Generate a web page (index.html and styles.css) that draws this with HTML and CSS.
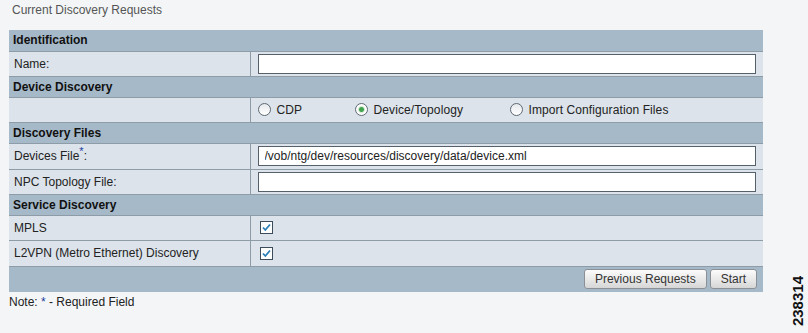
FILE: index.html
```html
<!DOCTYPE html>
<html lang="en">
<head>
  <meta charset="UTF-8">
  <meta name="viewport" content="width=device-width, initial-scale=1.0">
  <title>Current Discovery Requests</title>
  <link rel="stylesheet" href="styles.css">
</head>
<body>

  <div class="page">
    <h1 class="title">Current Discovery Requests</h1>

    <table class="form-table">
      <!-- Identification -->
      <tr class="section"><th colspan="2">Identification</th></tr>
      <tr class="row">
        <td class="label">Name:</td>
        <td class="field"><input type="text" class="text-input"></td>
      </tr>

      <!-- Device Discovery -->
      <tr class="section"><th colspan="2">Device Discovery</th></tr>
      <tr class="row">
        <td class="label"></td>
        <td class="field">
          <div class="radios">
            <label class="radio-item r-cdp"><input type="radio" name="mode"> CDP</label>
            <label class="radio-item r-dev"><input type="radio" name="mode" checked> Device/Topology</label>
            <label class="radio-item"><input type="radio" name="mode"> Import Configuration Files</label>
          </div>
        </td>
      </tr>

      <!-- Discovery Files -->
      <tr class="section"><th colspan="2">Discovery Files</th></tr>
      <tr class="row tall">
        <td class="label">Devices File<sup class="req">*</sup>:</td>
        <td class="field"><input type="text" class="text-input" value="/vob/ntg/dev/resources/discovery/data/device.xml"></td>
      </tr>
      <tr class="row">
        <td class="label">NPC Topology File:</td>
        <td class="field"><input type="text" class="text-input"></td>
      </tr>

      <!-- Service Discovery -->
      <tr class="section"><th colspan="2">Service Discovery</th></tr>
      <tr class="row">
        <td class="label">MPLS</td>
        <td class="field">
          <span class="check"><svg width="11" height="11" viewBox="0 0 11 11"><path d="M2 5.5 L4.3 8 L9 2.5" fill="none" stroke="#2b7fb8" stroke-width="1.8"/></svg></span>
        </td>
      </tr>
      <tr class="row tall">
        <td class="label">L2VPN (Metro Ethernet) Discovery</td>
        <td class="field">
          <span class="check"><svg width="11" height="11" viewBox="0 0 11 11"><path d="M2 5.5 L4.3 8 L9 2.5" fill="none" stroke="#2b7fb8" stroke-width="1.8"/></svg></span>
        </td>
      </tr>

      <!-- Buttons -->
      <tr class="actions">
        <td colspan="2">
          <div class="buttons">
            <button class="btn">Previous Requests</button>
            <button class="btn">Start</button>
          </div>
        </td>
      </tr>
    </table>

    <p class="note">Note: <span class="req-note">*</span> - Required Field</p>
  </div>

  <div class="figure-id">238314</div>

</body>
</html>
```

FILE: styles.css
```css
/* Base styling */
* {
  margin: 0;
  padding: 0;
  box-sizing: border-box;
}

body {
  background-color: #f3f5f7;
  font-family: 'Liberation Sans', Arial, sans-serif;
  font-size: 12px;
  color: #222;
  width: 808px;
  height: 333px;
  overflow: hidden;
  position: relative;
}

.page {
  padding: 3px 0 0 9px;
}

.title {
  font-size: 12px;
  font-weight: normal;
  color: #555;
  padding-left: 3px;
  height: 27px;
  line-height: 15px;
}

/* Form table */
.form-table {
  width: 754px;
  border-collapse: collapse;
}

.section th {
  background-color: #a6b9c9;
  text-align: left;
  font-weight: bold;
  color: #111;
  height: 21px;
  padding: 0 4px;
  border-bottom: 1px solid #8e9ca8;
}

.row td {
  background-color: #dce3ea;
  height: 25px;
  border-bottom: 1px solid #8e9ca8;
}

.row.tall td {
  height: 26px;
}

.row .label {
  width: 241px;
  padding-left: 5px;
  border-right: 1px solid #8e9ca8;
}

.row .field {
  padding: 0 7px;
}

.text-input {
  display: block;
  width: 498px;
  height: 20px;
  border: 1px solid #56606a;
  background: #fff;
  padding: 0 6px;
  font-family: 'Liberation Sans', Arial, sans-serif;
  font-size: 12px;
  color: #222;
  outline: none;
}

.req {
  color: #1d3c9c;
  font-size: 11px;
  vertical-align: 5px;
  line-height: 0;
}

/* Radios */
.radios {
  display: flex;
  align-items: center;
}

.radio-item {
  display: flex;
  align-items: center;
  gap: 6px;
  letter-spacing: 0.1px;
}

.r-cdp {
  width: 97px;
}

.r-dev {
  width: 155px;
}

.radio-item input {
  appearance: none;
  -webkit-appearance: none;
  width: 13px;
  height: 13px;
  border: 1px solid #5c6873;
  border-radius: 50%;
  background: linear-gradient(#e6e9ec, #ffffff);
  margin: 0;
}

.radio-item input:checked {
  background: radial-gradient(circle, #3fa34d 0, #3fa34d 2px, #d7e9d5 3px, #ffffff 4px);
}

/* Checkbox */
.check {
  display: flex;
  align-items: center;
  justify-content: center;
  width: 13px;
  height: 13px;
  border: 1px solid #3d4c5a;
  background: #fff;
  margin-left: 2px;
}

/* Button row */
.actions td {
  background-color: #a6b9c9;
  height: 26px;
  padding: 0 6px;
}

.buttons {
  display: flex;
  justify-content: flex-end;
  gap: 3px;
}

.btn {
  height: 20px;
  padding: 0 10px;
  border: 1px solid #8b9096;
  border-radius: 3px;
  background: linear-gradient(#fbfbfb, #e6e6e6 60%, #d6d6d6);
  font-family: 'Liberation Sans', Arial, sans-serif;
  font-size: 12px;
  color: #333;
}

.note {
  padding-top: 3px;
  color: #222;
}

.req-note {
  color: #1d3c9c;
}

/* Figure number in the margin */
.figure-id {
  position: absolute;
  right: 2px;
  bottom: 7px;
  writing-mode: vertical-rl;
  transform: rotate(180deg);
  font-family: 'Liberation Sans', Arial, sans-serif;
  font-weight: bold;
  font-size: 15px;
  color: #111;
}
```
